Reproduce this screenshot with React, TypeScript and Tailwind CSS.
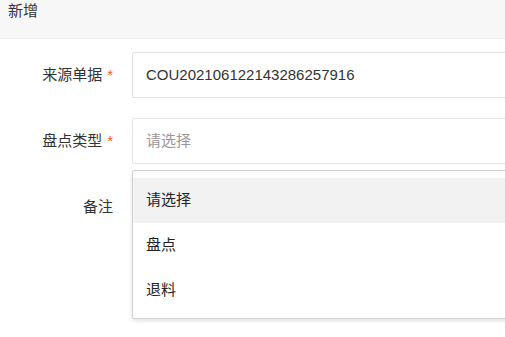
const font = {
  fontFamily: '"Liberation Sans", "Noto Sans CJK SC", sans-serif',
};

function Label({ text, required }: { text: string; required?: boolean }) {
  return (
    <label className="flex h-[46px] w-[132px] shrink-0 items-center justify-end pr-[19px] text-[15px] text-[#333]">
      {text}
      {required && <span className="ml-[5px] text-[15px] text-[#ff5722]">*</span>}
    </label>
  );
}

export default function App() {
  const options = ["请选择", "盘点", "退料"];

  return (
    <div className="h-[337px] w-[505px] overflow-hidden bg-white" style={font}>
      <div className="h-[39px] border-b border-[#eeeeee] bg-[#f7f7f7] px-2 pt-[1px] text-[15px] leading-[20px] text-[#333]">
        新增
      </div>

      <form className="flex w-[640px] flex-col gap-5 pt-[13px]">
        <div className="flex">
          <Label text="来源单据" required />
          <div className="flex h-[46px] flex-1 items-center rounded-[2px] border border-[#e2e2e2] pl-[13px] text-[15px] text-[#333]">
            COU202106122143286257916
          </div>
        </div>

        <div className="relative flex">
          <Label text="盘点类型" required />
          <div className="flex h-[46px] flex-1 items-center rounded-[2px] border border-[#e6e6e6] pl-[13px] text-[15px] text-[#999]">
            请选择
          </div>

          <ul className="absolute left-[132px] right-0 top-[52px] z-10 rounded-[2px] border border-[#d2d2d2] bg-white pb-[5px] pt-[7px] shadow-[0_2px_4px_rgba(0,0,0,0.12)]">
            {options.map((o, i) => (
              <li
                key={o}
                className={`flex h-[45px] items-center pl-[13px] text-[15px] text-[#222] ${
                  i === 0 ? "bg-[#f2f2f2]" : ""
                }`}
              >
                {o}
              </li>
            ))}
          </ul>
        </div>

        <div className="flex">
          <Label text="备注" />
          <div className="h-[120px] flex-1 rounded-[2px] border border-[#e6e6e6]" />
        </div>
      </form>
    </div>
  );
}
